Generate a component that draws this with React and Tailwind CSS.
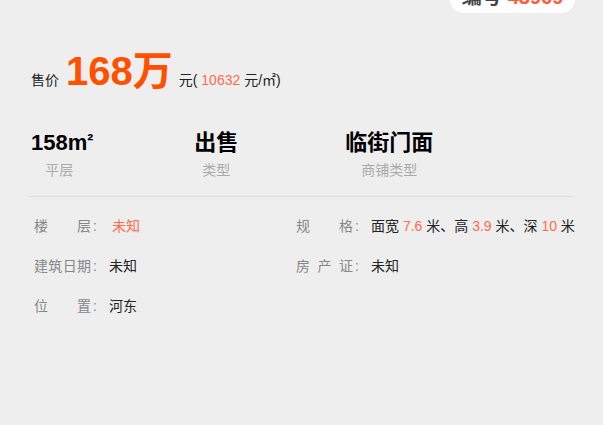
import React from 'react';

const font = { fontFamily: '"Liberation Sans", "Noto Sans CJK SC", sans-serif' };

const stats = [
  { value: '158m', sup: '²', label: '平层' },
  { value: '出售', label: '类型' },
  { value: '临街门面', label: '商铺类型' },
];

function Label({ text }) {
  return (
    <span className="flex w-[75px] flex-none text-[14px] text-[#888]">
      <span className="w-[57px] text-justify [text-align-last:justify]">{text}</span>
      <span className="pl-[2px]">:</span>
    </span>
  );
}

function Num({ children }) {
  return <span className="text-[#ff6a4d]">{children}</span>;
}

export default function App() {
  return (
    <div className="relative min-h-screen overflow-hidden bg-[#eeeeee] text-[#222]" style={font}>
      {/* id badge, cut off at the top */}
      <div className="absolute right-[28px] top-[-19px] flex h-[32px] w-[125px] items-center justify-center gap-[6px] rounded-[14px] bg-white text-[20px] font-bold">
        <span className="text-[#444]">编号</span>
        <span className="text-[#ff5a3c]">43969</span>
      </div>

      <div className="px-[29px] pt-[47px]">
        {/* price */}
        <div className="flex items-baseline pl-[2px]">
          <span className="text-[14px]">售价</span>
          <span className="ml-[7px] text-[40px] font-bold leading-[48px] text-[#ff5000]">168万</span>
          <span className="ml-[6px] text-[14px]">
            元( <Num>10632</Num> 元/㎡)
          </span>
        </div>

        {/* stats */}
        <div className="mt-[34px] flex gap-[107px] pl-[2px]">
          {stats.map(s => (
            <div key={s.label} className="flex flex-col items-center">
              <div className="relative text-[22px] font-bold leading-[28px] text-black">
                {s.value}
                {s.sup && <span className="absolute left-full top-[-3px] text-[18px]">{s.sup}</span>}
              </div>
              <div className="mt-[4px] text-[14px] leading-[18px] text-[#aaa]">{s.label}</div>
            </div>
          ))}
        </div>

        <div className="mt-[17px] h-px bg-[#dcdcdc]" />

        {/* details */}
        <div className="mt-[9px] grid grid-cols-[262px_1fr] pl-[5px] text-[14px]">
          <div className="flex h-[40px] items-center">
            <Label text="楼层" />
            <span className="pl-[3px] text-[#ff6a4d]">未知</span>
          </div>
          <div className="flex h-[40px] items-center whitespace-nowrap">
            <Label text="规格" />
            <span className="text-[#222]">
              面宽 <Num>7.6</Num> 米、高 <Num>3.9</Num> 米、深 <Num>10</Num> 米
            </span>
          </div>
          <div className="flex h-[40px] items-center">
            <Label text="建筑日期" />
            <span>未知</span>
          </div>
          <div className="flex h-[40px] items-center">
            <Label text="房产证" />
            <span>未知</span>
          </div>
          <div className="flex h-[40px] items-center">
            <Label text="位置" />
            <span>河东</span>
          </div>
        </div>
      </div>
    </div>
  );
}
